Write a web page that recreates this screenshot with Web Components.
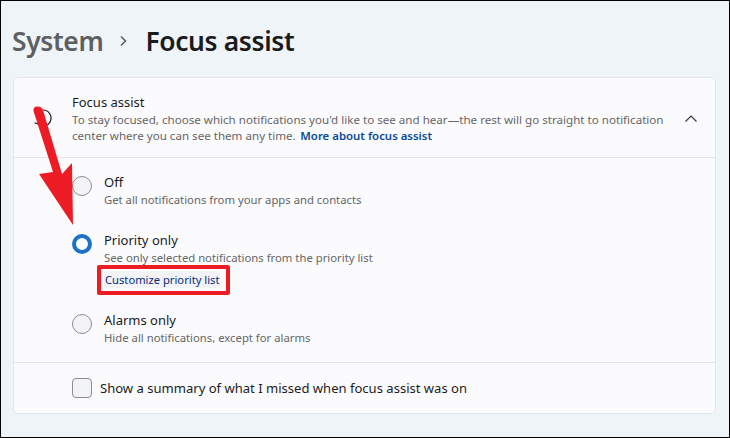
<!DOCTYPE html>
<html>
<head>
<meta charset="utf-8">
<title>Focus assist</title>
<style>
html, body { margin: 0; padding: 0; }
body { font-family: "Noto Sans", "Open Sans", sans-serif; }
</style>
</head>
<body>
<settings-page>
    <page-title slot="title" parent="System" current="Focus assist"></page-title>
    <settings-card>
        <card-header slot="header" heading="Focus assist">
            To stay focused, choose which notifications you'd like to see and hear—the rest will go straight to notification<br>center where you can see them any time.&nbsp; <a>More about focus assist</a>
        </card-header>
        <radio-option heading="Off" hint="Get all notifications from your apps and contacts"></radio-option>
        <radio-option checked heading="Priority only" hint="See only selected notifications from the priority list">
            <span>Customize priority list</span>
        </radio-option>
        <radio-option last heading="Alarms only" hint="Hide all notifications, except for alarms"></radio-option>
        <check-row slot="footer">Show a summary of what I missed when focus assist was on</check-row>
    </settings-card>
    <red-annotations slot="overlay"></red-annotations>
</settings-page>

<script>
class SettingsPage extends HTMLElement {
    constructor() {
        super();
        this.shadowDOM = this.attachShadow({ mode: "open" });
    }

    connectedCallback() {
        this.shadowDOM.innerHTML = `
        <style>
            :host {
                display: flex;
                flex-direction: column;
                position: relative;
                box-sizing: border-box;
                width: 730px;
                height: 438px;
                padding: 0 12px;
                background-color: #eff4f9;
                border: 1px solid #000;
                overflow: hidden;
            }
        </style>
        <slot name="title"></slot>
        <slot></slot>
        <slot name="overlay"></slot>`;
    }
}

class PageTitle extends HTMLElement {
    constructor() {
        super();
        this.shadowDOM = this.attachShadow({ mode: "open" });
    }

    connectedCallback() {
        this.shadowDOM.innerHTML = `
        <style>
            :host {
                display: flex;
                align-items: center;
                height: 76px;
                padding-top: 3px;
                margin-left: -1px;
                box-sizing: border-box;
                font-size: 26.4px;
                font-weight: 600;
                letter-spacing: -0.35px;
            }
            .parent { color: #5d5f61; }
            .current { color: #1b1b1b; }
            svg { margin: 0 17px 0 16px; }
        </style>
        <span class="parent">${this.getAttribute("parent")}</span>
        <svg width="9" height="12" viewBox="0 0 9 12" fill="none" stroke="#5d5f61" stroke-width="1.6">
            <path d="M2 1.5 L6.5 6 L2 10.5"/>
        </svg>
        <span class="current">${this.getAttribute("current")}</span>`;
    }
}

class SettingsCard extends HTMLElement {
    constructor() {
        super();
        this.shadowDOM = this.attachShadow({ mode: "open" });
    }

    connectedCallback() {
        this.shadowDOM.innerHTML = `
        <style>
            :host {
                display: block;
                box-sizing: border-box;
                width: 703px;
                height: 337px;
                background-color: #fbfbfd;
                border: 1px solid #e3e7eb;
                border-radius: 5px;
            }
            .options {
                display: flex;
                flex-direction: column;
                height: 204px;
                padding-top: 15px;
                box-sizing: border-box;
            }
        </style>
        <slot name="header"></slot>
        <div class="options"><slot></slot></div>
        <slot name="footer"></slot>`;
    }
}

class CardHeader extends HTMLElement {
    constructor() {
        super();
        this.shadowDOM = this.attachShadow({ mode: "open" });
    }

    connectedCallback() {
        this.shadowDOM.innerHTML = `
        <style>
            :host {
                display: flex;
                align-items: center;
                box-sizing: border-box;
                height: 80px;
                padding: 0 18px 0 19px;
                border-bottom: 1px solid #e3e7eb;
            }
            .moon { flex: none; width: 20px; height: 20px; margin-right: 19px; }
            .text { flex: 1; padding-top: 1px; }
            h2 {
                margin: 0 0 1px;
                font-size: 13px;
                line-height: 18px;
                font-weight: 400;
                color: #1b1b1b;
            }
            p {
                margin: 0;
                font-size: 11.6px;
                line-height: 16px;
                color: #666;
                white-space: nowrap;
            }
            ::slotted(a) { color: #0a4a96; font-weight: 600; font-size: 11.4px; margin-left: -1.5px; }
            .chevron { flex: none; margin-right: -1px; margin-top: 2px; }
        </style>
        <svg class="moon" viewBox="0 0 20 20" fill="none" stroke="#1b1b1b" stroke-width="1.2">
            <path d="M10 2 A8 8 0 1 1 4.5 15.8 L1.5 14.8"/>
        </svg>
        <div class="text">
            <h2>${this.getAttribute("heading")}</h2>
            <p><slot></slot></p>
        </div>
        <svg class="chevron" width="14" height="9" viewBox="0 0 14 9" fill="none" stroke="#3a3a3a" stroke-width="1.2">
            <path d="M1.5 7.5 L7 2 L12.5 7.5"/>
        </svg>`;
    }
}

class RadioOption extends HTMLElement {
    constructor() {
        super();
        this.shadowDOM = this.attachShadow({ mode: "open" });
    }

    connectedCallback() {
        this.shadowDOM.innerHTML = `
        <style>
            :host {
                display: flex;
                flex: none;
                gap: 12px;
                padding-left: 58px;
                height: 58px;
                box-sizing: border-box;
            }
            :host([checked]) { height: 80px; }
            :host([last]) { height: auto; }
            .dot {
                flex: none;
                box-sizing: border-box;
                width: 20px;
                height: 20px;
                margin-top: 3px;
                border-radius: 50%;
                border: 1px solid #8c8c8c;
                background-color: #f2f3f4;
            }
            :host([checked]) .dot {
                border: 4.5px solid #1a73c4;
                background-color: #fbfbfd;
            }
            .title {
                font-size: 13px;
                line-height: 18px;
                color: #1b1b1b;
            }
            .hint {
                font-size: 11.3px;
                line-height: 16px;
                margin-top: 1px;
                color: #666;
            }
            ::slotted(span) {
                display: inline-block;
                margin-top: 5px;
                padding: 0 1px;
                font-size: 11.2px;
                line-height: 17px;
                color: #0b2a7a;
                background-color: #f1f3f6;
                border-radius: 3px;
            }
        </style>
        <div class="dot"></div>
        <div>
            <div class="title">${this.getAttribute("heading")}</div>
            <div class="hint">${this.getAttribute("hint")}</div>
            <slot></slot>
        </div>`;
    }
}

class CheckRow extends HTMLElement {
    constructor() {
        super();
        this.shadowDOM = this.attachShadow({ mode: "open" });
    }

    connectedCallback() {
        this.shadowDOM.innerHTML = `
        <style>
            :host {
                display: flex;
                align-items: center;
                gap: 8px;
                box-sizing: border-box;
                height: 50px;
                padding-left: 58px;
                border-top: 1px solid #e3e7eb;
                font-size: 13.05px;
                color: #1b1b1b;
            }
            .box {
                flex: none;
                box-sizing: border-box;
                width: 20px;
                height: 20px;
                border: 1px solid #8c8c8c;
                border-radius: 4px;
                background-color: #f2f3f4;
            }
        </style>
        <div class="box"></div>
        <span><slot></slot></span>`;
    }
}

class RedAnnotations extends HTMLElement {
    constructor() {
        super();
        this.shadowDOM = this.attachShadow({ mode: "open" });
    }

    connectedCallback() {
        // marks drawn over the screenshot, so these sit on top of the flow
        this.shadowDOM.innerHTML = `
        <style>
            :host { position: absolute; left: -1px; top: -1px; width: 730px; height: 438px; pointer-events: none; }
            svg { position: absolute; left: 0; top: 0; }
            .box {
                position: absolute;
                left: 97px;
                top: 265px;
                width: 133px;
                height: 30px;
                box-sizing: border-box;
                border: 4px solid #ed1c24;
                border-radius: 2px;
            }
        </style>
        <svg width="730" height="438" viewBox="0 0 730 438">
            <path fill="#ed1c24" d="M33.5 111 Q33 106.5 37 106.5 Q41.5 106 43 110 L62 174 L72 163 L73 225 L39 174 L53 172 Z"/>
        </svg>
        <div class="box"></div>`;
    }
}

customElements.define("settings-page", SettingsPage);
customElements.define("page-title", PageTitle);
customElements.define("settings-card", SettingsCard);
customElements.define("card-header", CardHeader);
customElements.define("radio-option", RadioOption);
customElements.define("check-row", CheckRow);
customElements.define("red-annotations", RedAnnotations);
</script>
</body>
</html>
